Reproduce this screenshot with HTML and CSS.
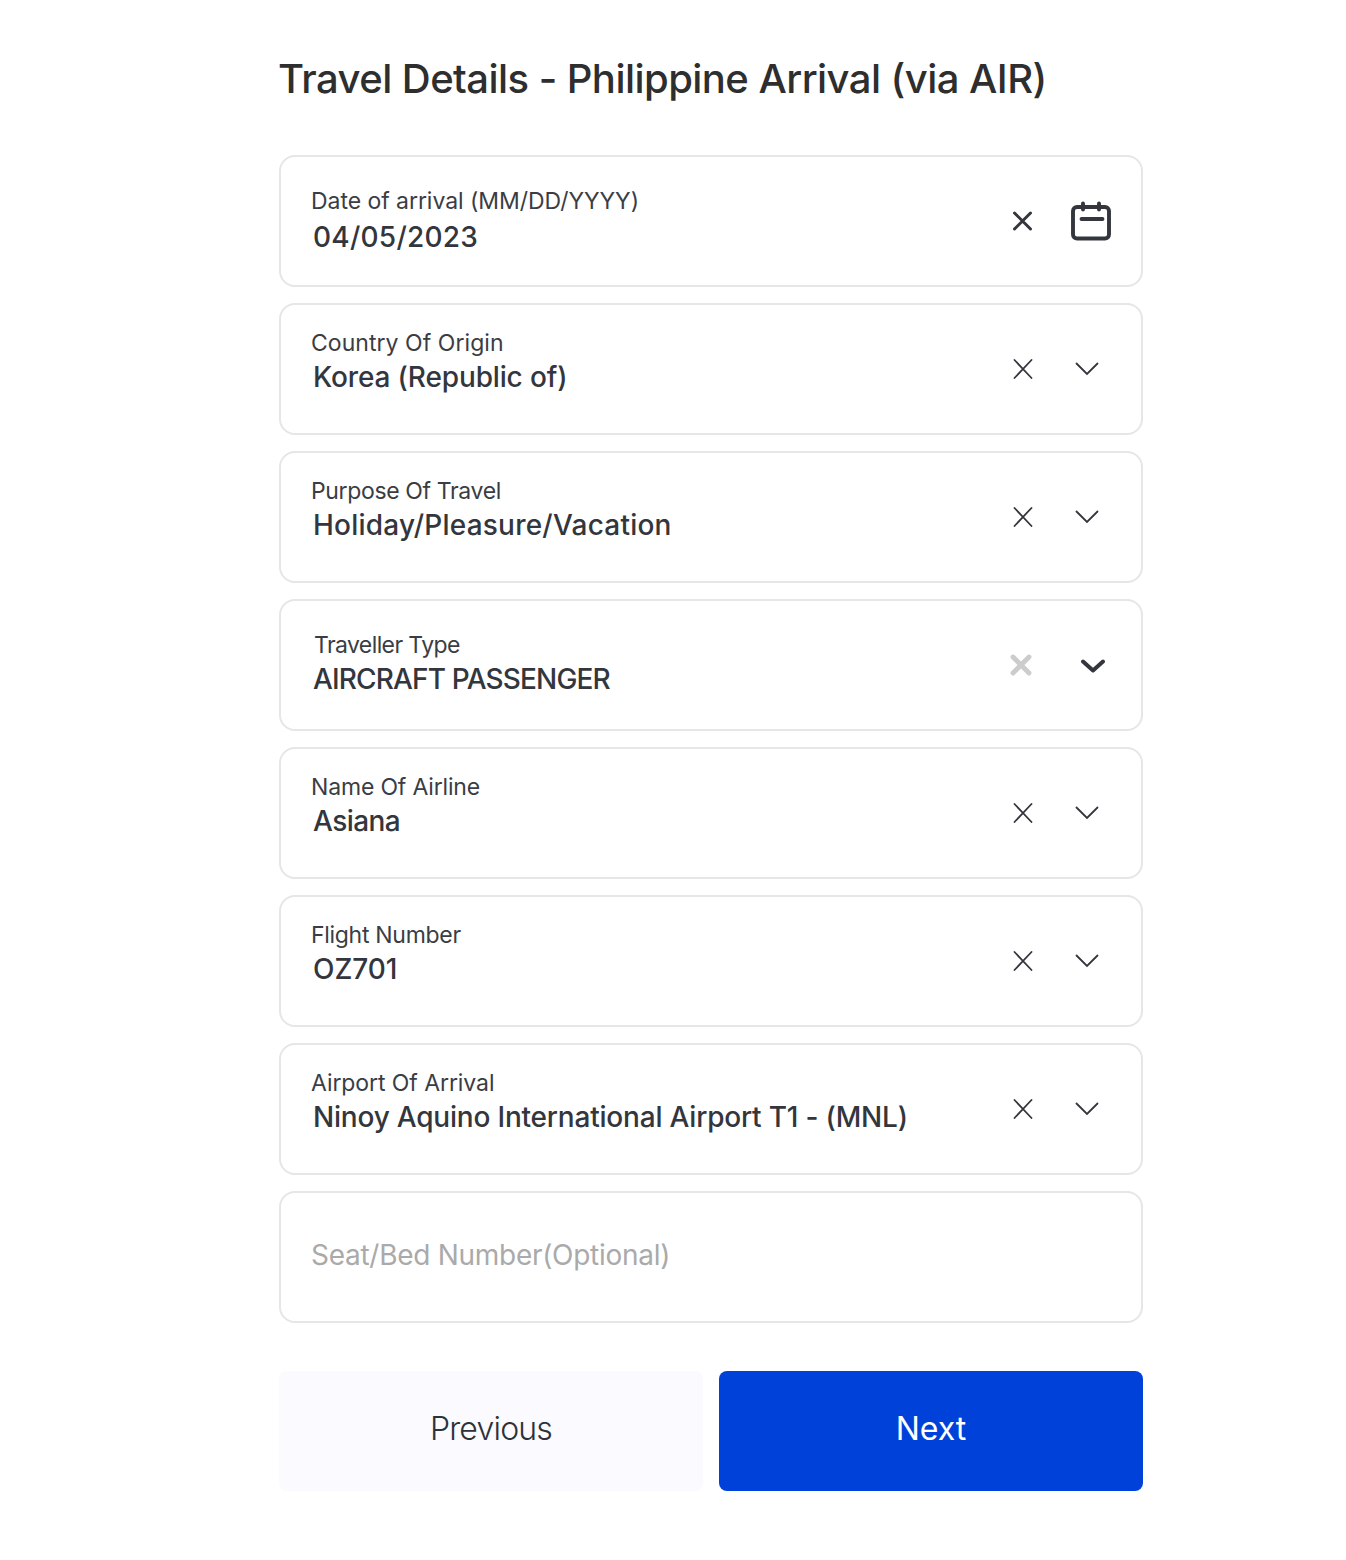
FILE: index.html
```html
<!DOCTYPE html>
<html lang="en">
<head>
<meta charset="utf-8">
<title>Travel Details</title>
<link rel="stylesheet" href="styles.css">
</head>
<body>
<main class="page">
  <h1 class="title">Travel Details - Philippine Arrival (via AIR)</h1>
  <form class="fields">
    <div class="card card-date">
      <div class="text"><div class="label">Date of arrival (MM/DD/YYYY)</div><div class="value">04/05/2023</div></div>
      <div class="icons icons-date">
        <svg width="24" height="24" viewBox="0 0 24 24"><path d="M3.500 4l16 16M19.500 4l-16 16" fill="none" stroke="#33363d" stroke-width="3" stroke-linecap="round"/></svg>
        <svg width="40" height="40" viewBox="0 0 40 40"><g fill="none" stroke="#33363d" stroke-linecap="round" stroke-linejoin="round" stroke-width="3.900"><rect x="2" y="6" width="36" height="31.500" rx="4"/><path d="M12 2.500v6M28 2.500v6M10.500 18h21"/></g></svg>
      </div>
    </div>
    <div class="card card-country">
      <div class="text"><div class="label">Country Of Origin</div><div class="value">Korea (Republic of)</div></div>
      <div class="icons">
        <svg width="24" height="24" viewBox="0 0 24 24"><path d="M3.500 3l17 18M20.500 3L3.500 21" fill="none" stroke="#33363d" stroke-width="1.800" stroke-linecap="round"/></svg>
        <svg width="24" height="24" viewBox="0 0 24 24"><path d="M1.500 6.500L12 17L22.500 6.500" fill="none" stroke="#33363d" stroke-width="1.800" stroke-linecap="round"/></svg>
      </div>
    </div>
    <div class="card card-purpose">
      <div class="text"><div class="label">Purpose Of Travel</div><div class="value">Holiday/Pleasure/Vacation</div></div>
      <div class="icons">
        <svg width="24" height="24" viewBox="0 0 24 24"><path d="M3.500 3l17 18M20.500 3L3.500 21" fill="none" stroke="#33363d" stroke-width="1.800" stroke-linecap="round"/></svg>
        <svg width="24" height="24" viewBox="0 0 24 24"><path d="M1.500 6.500L12 17L22.500 6.500" fill="none" stroke="#33363d" stroke-width="1.800" stroke-linecap="round"/></svg>
      </div>
    </div>
    <div class="card card-type">
      <div class="text"><div class="label">Traveller Type</div><div class="value">AIRCRAFT PASSENGER</div></div>
      <div class="icons icons-type">
        <svg width="24" height="24" viewBox="0 0 24 24"><path d="M4 4l16 16M20 4L4 20" fill="none" stroke="#cccccc" stroke-width="4.800" stroke-linecap="round"/></svg>
        <svg width="24" height="24" viewBox="0 0 24 24"><path d="M2 8.500L12 17.500L22 8.500" fill="none" stroke="#33363d" stroke-width="4" stroke-linecap="round" stroke-linejoin="round"/></svg>
      </div>
    </div>
    <div class="card card-airline">
      <div class="text"><div class="label">Name Of Airline</div><div class="value">Asiana</div></div>
      <div class="icons">
        <svg width="24" height="24" viewBox="0 0 24 24"><path d="M3.500 3l17 18M20.500 3L3.500 21" fill="none" stroke="#33363d" stroke-width="1.800" stroke-linecap="round"/></svg>
        <svg width="24" height="24" viewBox="0 0 24 24"><path d="M1.500 6.500L12 17L22.500 6.500" fill="none" stroke="#33363d" stroke-width="1.800" stroke-linecap="round"/></svg>
      </div>
    </div>
    <div class="card card-flight">
      <div class="text"><div class="label">Flight Number</div><div class="value">OZ701</div></div>
      <div class="icons">
        <svg width="24" height="24" viewBox="0 0 24 24"><path d="M3.500 3l17 18M20.500 3L3.500 21" fill="none" stroke="#33363d" stroke-width="1.800" stroke-linecap="round"/></svg>
        <svg width="24" height="24" viewBox="0 0 24 24"><path d="M1.500 6.500L12 17L22.500 6.500" fill="none" stroke="#33363d" stroke-width="1.800" stroke-linecap="round"/></svg>
      </div>
    </div>
    <div class="card card-airport">
      <div class="text"><div class="label">Airport Of Arrival</div><div class="value">Ninoy Aquino International Airport T1 - (MNL)</div></div>
      <div class="icons">
        <svg width="24" height="24" viewBox="0 0 24 24"><path d="M3.500 3l17 18M20.500 3L3.500 21" fill="none" stroke="#33363d" stroke-width="1.800" stroke-linecap="round"/></svg>
        <svg width="24" height="24" viewBox="0 0 24 24"><path d="M1.500 6.500L12 17L22.500 6.500" fill="none" stroke="#33363d" stroke-width="1.800" stroke-linecap="round"/></svg>
      </div>
    </div>
    <div class="card card-empty"><div class="placeholder">Seat/Bed Number(Optional)</div></div>
  </form>
  <div class="actions">
    <button class="btn btn-prev" type="button">Previous</button>
    <button class="btn btn-next" type="button">Next</button>
  </div>
</main>
</body>
</html>
```
FILE: styles.css
```css
* { box-sizing: border-box; }
html, body { margin: 0; background: #fff; }
body { font-family: Inter, "Liberation Sans", sans-serif; color: #33363d; }
.page { width: 864px; margin-left: 279px; padding-top: 54px; height: 1560px; }
.title { margin: 0 0 51px -1px; font-size: 40px; line-height: 50px; font-weight: 500; color: #2e2e2e; white-space: nowrap; letter-spacing: -0.55px; }
.fields { display: flex; flex-direction: column; gap: 16px; }
.card { --ls-label: -0.3px; --ls-value: -0.25px; height: 132px; border: 2px solid #e6e6e6; border-radius: 16px; display: flex; align-items: center; padding: 0 42px 0 30px; background: #fff; }
.text { flex: 1; align-self: flex-start; padding-top: 23px; }
.label { font-size: 23px; line-height: 30px; font-weight: 400; color: #3a3d44; letter-spacing: var(--ls-label); }
.value { font-size: 28px; line-height: 36px; font-weight: 550; margin: 1px 0 0 2px; color: #33363d; letter-spacing: var(--ls-value); }
.icons { display: flex; align-items: center; gap: 40px; }
.card-date { --ls-label: -0.05px; --ls-value: 0.25px; }
.card-date .text { padding-top: 29px; }
.card-date .value { margin-top: 3px; }
.card-country { --ls-label: 0.05px; --ls-value: -0.15px; }
.card-purpose { --ls-label: -0.36px; --ls-value: 0.22px; }
.card-type { --ls-label: -0.6px; --ls-value: -0.85px; }
.card-airline { --ls-label: -0.17px; --ls-value: -0.55px; }
.card-flight { --ls-label: -0.3px; --ls-value: -0.05px; }
.card-airport { --ls-label: -0.08px; --ls-value: -0.2px; }
.icons-date { gap: 36px; margin-right: -12px; }
.card-type .text { padding-top: 29px; }
.card-type .label { margin-left: 3px; }
.icons-type { gap: 48px; margin-right: -6px; }
.placeholder { font-size: 28px; line-height: 36px; color: #aaaaaa; margin: -4px 0 0 0; letter-spacing: -0.28px; }
.actions { display: flex; gap: 16px; margin-top: 48px; }
.btn { flex: 1; height: 120px; border: 0; border-radius: 8px; padding: 0 0 6px; font: 400 32px Inter, "Liberation Sans", sans-serif; }
.btn-prev { background: #fafaff; color: #2e3138; letter-spacing: -0.8px; font-weight: 300; }
.btn-next { background: #0041d9; color: #fff; }
```
